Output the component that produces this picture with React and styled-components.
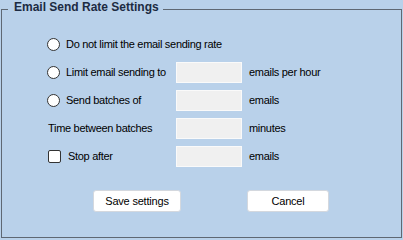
import React, { useState } from 'react';
import styled, { createGlobalStyle } from 'styled-components';

const GlobalStyle = createGlobalStyle`
  html, body {
    margin: 0;
    padding: 0;
    background: #b9d1ea;
    font-family: "Liberation Sans", Arial, sans-serif;
    font-size: 11px;
    color: #000;
  }
`;

// group box
const Group = styled.fieldset`
  box-sizing: border-box;
  width: 401px;
  height: 238px;
  margin: 0 0 0 1px;
  padding: 0;
  min-width: 0;
  border: 1px solid #5f6873;
`;

const Title = styled.legend`
  margin-left: 6px;
  padding: 0 4px 4px 6px;
  font-size: 12px;
  line-height: 14px;
  font-weight: bold;
  color: #1c2b42;
`;

// rows of options
const Grid = styled.div`
  display: grid;
  grid-template-columns: 129px 66px auto;
  grid-auto-rows: 28px;
  align-items: center;
  margin-top: 12px;
  padding-left: 45px;
`;

const Option = styled.label`
  display: flex;
  align-items: center;
  gap: 6px;
  letter-spacing: -0.3px;
  white-space: nowrap;
  grid-column: ${(p) => (p.$wide ? '1 / -1' : 'auto')};
  padding-left: ${(p) => (p.$check ? '1px' : '0')};
`;

const Plain = styled.span`
  padding-left: 1px;
  letter-spacing: -0.3px;
  white-space: nowrap;
`;

const Radio = styled.input.attrs({ type: 'radio' })`
  appearance: none;
  box-sizing: border-box;
  width: 13px;
  height: 13px;
  margin: 0;
  border: 1px solid #333;
  border-radius: 50%;
  background: #fff;
  flex: none;

  &:checked {
    background: radial-gradient(circle, #333 0 3px, #fff 3.5px);
  }
`;

const Check = styled.input.attrs({ type: 'checkbox' })`
  appearance: none;
  box-sizing: border-box;
  width: 13px;
  height: 13px;
  margin: 0 1px 0 0;
  border: 1px solid #333;
  border-radius: 2px;
  background: #fff;
  flex: none;
`;

const Field = styled.input`
  box-sizing: border-box;
  width: 66px;
  height: 21px;
  margin: 0;
  padding: 0 3px;
  border: 1px solid #fafafa;
  background: #f0f0f0;
  font: inherit;
  outline: none;
`;

const Unit = styled.span`
  margin-left: 7px;
  letter-spacing: -0.3px;
  white-space: nowrap;
`;

// buttons
const Buttons = styled.div`
  display: flex;
  gap: 66px;
  margin-top: 20px;
  padding-left: 91px;
`;

const Button = styled.button`
  box-sizing: border-box;
  width: ${(p) => p.$w}px;
  height: 22px;
  padding: 0;
  background: #fff;
  border: 1px solid #d4d8de;
  border-radius: 3px;
  font-family: inherit;
  font-size: 11px;
  letter-spacing: -0.2px;
  color: #000;
`;

export default function App() {
  const [mode, setMode] = useState('');

  return (
    <>
      <GlobalStyle />
      <Group>
        <Title>Email Send Rate Settings</Title>
        <Grid>
          <Option $wide>
            <Radio name="rate" checked={mode === 'none'} onChange={() => setMode('none')} />
            Do not limit the email sending rate
          </Option>

          <Option>
            <Radio name="rate" checked={mode === 'hour'} onChange={() => setMode('hour')} />
            Limit email sending to
          </Option>
          <Field />
          <Unit>emails per hour</Unit>

          <Option>
            <Radio name="rate" checked={mode === 'batch'} onChange={() => setMode('batch')} />
            Send batches of
          </Option>
          <Field />
          <Unit>emails</Unit>

          <Plain>Time between batches</Plain>
          <Field />
          <Unit>minutes</Unit>

          <Option $check>
            <Check />
            Stop after
          </Option>
          <Field />
          <Unit>emails</Unit>
        </Grid>

        <Buttons>
          <Button $w={88}>Save settings</Button>
          <Button $w={82}>Cancel</Button>
        </Buttons>
      </Group>
    </>
  );
}
